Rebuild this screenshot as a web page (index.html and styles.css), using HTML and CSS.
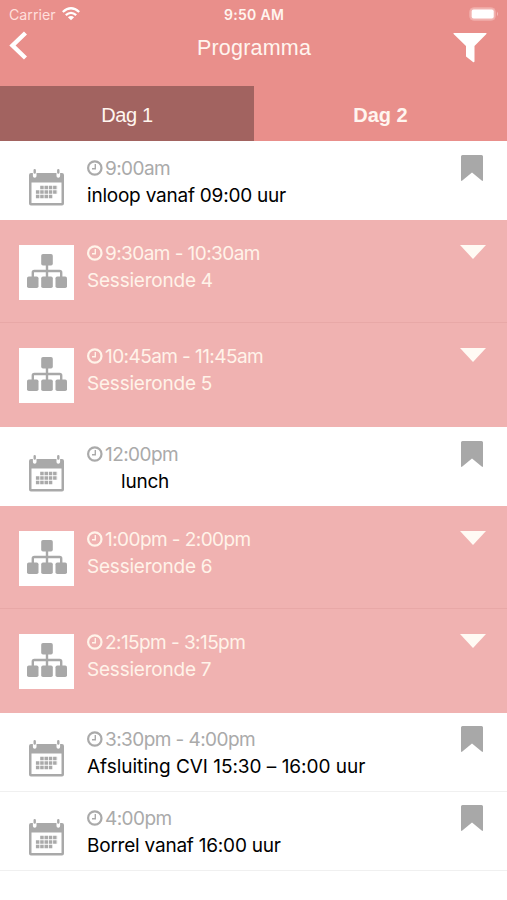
FILE: index.html
```html
<!DOCTYPE html>
<html lang="nl">
<head>
<meta charset="utf-8">
<title>Programma</title>
<link rel="stylesheet" href="styles.css">
</head>
<body>
<svg class="defs" aria-hidden="true">
  <symbol id="calendar" viewBox="0 0 35 37">
    <path fill="currentColor" fill-rule="evenodd" d="M2 4H33Q35 4 35 6V34.500Q35 36.500 33 36.500H2Q0 36.500 0 34.500V6Q0 4 2 4ZM2.500 13.500V34H32.500V13.500Z"/>
    <path d="M5.700 3V7M29.300 3V7" stroke="#fff" stroke-width="3.600" stroke-linecap="round"/>
    <path d="M5.700 1.300V3.500M29.300 1.300V3.500" stroke="currentColor" stroke-width="2.400" stroke-linecap="round"/>
    <path d="M11.200 18.500H28.500M6.900 23H28.500M6.900 27.500H24" stroke="currentColor" stroke-width="3.500" stroke-dasharray="3.500 .8"/>
  </symbol>
  <symbol id="sitemap" viewBox="0 0 40 34">
    <g fill="currentColor"><rect x="14.200" width="11.600" height="11.500" rx="1.800"/><rect y="22.500" width="11.500" height="11.500" rx="1.800"/><rect x="14.200" y="22.500" width="11.600" height="11.500" rx="1.800"/><rect x="28.500" y="22.500" width="11.500" height="11.500" rx="1.800"/></g>
    <path d="M20 11V23M5.800 23V18.500Q5.800 17 7.300 17H32.700Q34.200 17 34.200 18.500V23" fill="none" stroke="currentColor" stroke-width="2.400"/>
  </symbol>
  <symbol id="clock" viewBox="0 0 16 16">
    <circle cx="7.800" cy="8" r="6.700" fill="none" stroke="currentColor" stroke-width="2.200"/>
    <path d="M8.300 4V8.700H5" fill="none" stroke="currentColor" stroke-width="1.400"/>
  </symbol>
  <symbol id="bookmark" viewBox="0 0 22 26">
    <path fill="currentColor" d="M1.500 0H20.500Q22 0 22 1.500V25Q22 26.500 20.700 25.500L11 17.500L1.300 25.500Q0 26.500 0 25V1.500Q0 0 1.500 0Z"/>
  </symbol>
  <symbol id="caret" viewBox="0 0 26 14"><path fill="currentColor" d="M0 0H26L13 14Z"/></symbol>
</svg>

<header class="header">
  <div class="status">
    <span class="carrier">Carrier</span>
    <svg class="wifi" viewBox="0 0 18 14" fill="none" stroke="#fff" stroke-width="2.300"><path d="M.8 5Q9-2.500 17.200 5M3.800 8.200Q9 3.500 14.200 8.200"/><path d="M9 13.300L5.900 10.200Q9 7.700 12.100 10.200Z" fill="#fff" stroke="none"/></svg>
    <span class="time">9:50 AM</span>
    <svg class="battery" viewBox="0 0 30 14"><rect x=".7" y=".7" width="25.600" height="12.600" rx="4" fill="#f2b5b2" stroke="#f0aaa7"/><rect x="2.700" y="2.500" width="22" height="9" rx="2" fill="#fff"/><path d="M28 4.800Q30 7 28 9.200Z" fill="#f4bbb8"/></svg>
  </div>
  <div class="nav">
    <svg class="back" viewBox="0 0 18 29"><path d="M16.500 2L3.500 14.500L16.500 27" fill="none" stroke="#fff" stroke-width="4.400"/></svg>
    <h1 class="title">Programma</h1>
    <svg class="filter" viewBox="0 0 34 30"><path fill="#fff" d="M1 0H33Q34 0 33.400 1L21.500 13V28Q21.500 30 20 29L13 23.500V13L.6 1Q0 0 1 0Z"/></svg>
  </div>
</header>

<nav class="tabs">
  <div class="tab tab-dim">Dag 1</div>
  <div class="tab tab-current">Dag 2</div>
</nav>

<main>
  <section class="row item">
    <div class="thumb"><svg><use href="#calendar"/></svg></div>
    <div class="info"><div class="when"><svg><use href="#clock"/></svg><span>9:00am</span></div><div class="name">inloop vanaf 09:00 uur</div></div>
    <svg class="mark"><use href="#bookmark"/></svg>
  </section>
  <section class="row session">
    <div class="thumb"><svg><use href="#sitemap"/></svg></div>
    <div class="info"><div class="when"><svg><use href="#clock"/></svg><span>9:30am - 10:30am</span></div><div class="name">Sessieronde 4</div></div>
    <svg class="arrow"><use href="#caret"/></svg>
  </section>
  <section class="row session last">
    <div class="thumb"><svg><use href="#sitemap"/></svg></div>
    <div class="info"><div class="when"><svg><use href="#clock"/></svg><span>10:45am - 11:45am</span></div><div class="name">Sessieronde 5</div></div>
    <svg class="arrow"><use href="#caret"/></svg>
  </section>
  <section class="row item">
    <div class="thumb"><svg><use href="#calendar"/></svg></div>
    <div class="info"><div class="when"><svg><use href="#clock"/></svg><span>12:00pm</span></div><div class="name indented">lunch</div></div>
    <svg class="mark"><use href="#bookmark"/></svg>
  </section>
  <section class="row session">
    <div class="thumb"><svg><use href="#sitemap"/></svg></div>
    <div class="info"><div class="when"><svg><use href="#clock"/></svg><span>1:00pm - 2:00pm</span></div><div class="name">Sessieronde 6</div></div>
    <svg class="arrow"><use href="#caret"/></svg>
  </section>
  <section class="row session last">
    <div class="thumb"><svg><use href="#sitemap"/></svg></div>
    <div class="info"><div class="when"><svg><use href="#clock"/></svg><span>2:15pm - 3:15pm</span></div><div class="name">Sessieronde 7</div></div>
    <svg class="arrow"><use href="#caret"/></svg>
  </section>
  <section class="row item ruled">
    <div class="thumb"><svg><use href="#calendar"/></svg></div>
    <div class="info"><div class="when"><svg><use href="#clock"/></svg><span>3:30pm - 4:00pm</span></div><div class="name wide">Afsluiting CVI 15:30 – 16:00 uur</div></div>
    <svg class="mark"><use href="#bookmark"/></svg>
  </section>
  <section class="row item ruled">
    <div class="thumb"><svg><use href="#calendar"/></svg></div>
    <div class="info"><div class="when"><svg><use href="#clock"/></svg><span>4:00pm</span></div><div class="name">Borrel vanaf 16:00 uur</div></div>
    <svg class="mark"><use href="#bookmark"/></svg>
  </section>
</main>
</body>
</html>
```

FILE: styles.css
```css
* { box-sizing: border-box; }
body { margin: 0; background: #fff; font-family: Inter, "Liberation Sans", sans-serif; overflow: hidden; }
svg { display: block; flex: none; }
.defs { width: 0; height: 0; position: absolute; }

.header { height: 86px; background: #e98f8b; color: #fff5ef; }
.status { height: 28px; display: grid; grid-template-columns: 53px 152px 80px 1fr; padding: 0 8px 0 9px; align-items: center; font-size: 14.2px; }
.carrier { color: #ffdfdc; }
.wifi { width: 18px; height: 14px; }
.time { font-size: 14px; font-weight: 600; text-align: center; white-space: nowrap; letter-spacing: .3px; }
.battery { width: 30px; height: 14px; justify-self: end; }
.nav { display: grid; grid-template-columns: 18px 1fr 34px; align-items: start; padding: 3px 20px 0 9px; }
.back { width: 18px; height: 29px; }
.title { margin: 5px 0 0 28px; text-align: center; font: 400 21.5px/24px "Liberation Sans", sans-serif; letter-spacing: .2px; }
.filter { width: 34px; height: 30px; margin-top: 2px; }

.tabs { height: 55px; display: grid; grid-template-columns: 254px 253px; background: #e98f8b; }
.tab { height: 55px; font: 400 20px/58px "Liberation Sans", sans-serif; text-align: center; color: #fff5ef; }
.tab-dim { background: #a26360; letter-spacing: -.4px; }
.tab-current { font-weight: 700; }

.row { display: flex; align-items: flex-start; font-size: 19px; line-height: 27px; }
.thumb { flex: none; }
.info { flex: 1; white-space: nowrap; }
.name { letter-spacing: -.22px; }
.name.wide { letter-spacing: -.03px; }
.when { display: flex; align-items: center; gap: 2px; letter-spacing: -.57px; }
.when svg { width: 16px; height: 16px; margin-bottom: 1px; }

.item { height: 79px; padding: 13.5px 24px 0 29px; color: #000; }
.item .thumb { width: 58px; padding-top: 14px; color: #a9a9a9; }
.item .thumb svg { width: 35px; height: 37px; }
.item .when { color: #aaa; }
.mark { width: 22px; height: 26px; color: #a8a8a8; }
.indented { padding-left: 34px; }
.ruled { padding-top: 13px; border-bottom: 1px solid #f0f0f0; }

.session { height: 103px; padding: 20px 21px 0 19px; background: #f0b2b1; color: #fff3e9; border-bottom: 1px solid #e8a8a7; }
.session.last { height: 104px; border-bottom: 0; }
.session .thumb { width: 55px; height: 55px; margin: 5px 13px 0 0; padding: 9px 0 0 8px; background: #fff; color: #a8a8a8; }
.session .thumb svg { width: 40px; height: 34px; }
.arrow { width: 26px; height: 14px; margin-top: 5px; color: #fffaf4; }
```
